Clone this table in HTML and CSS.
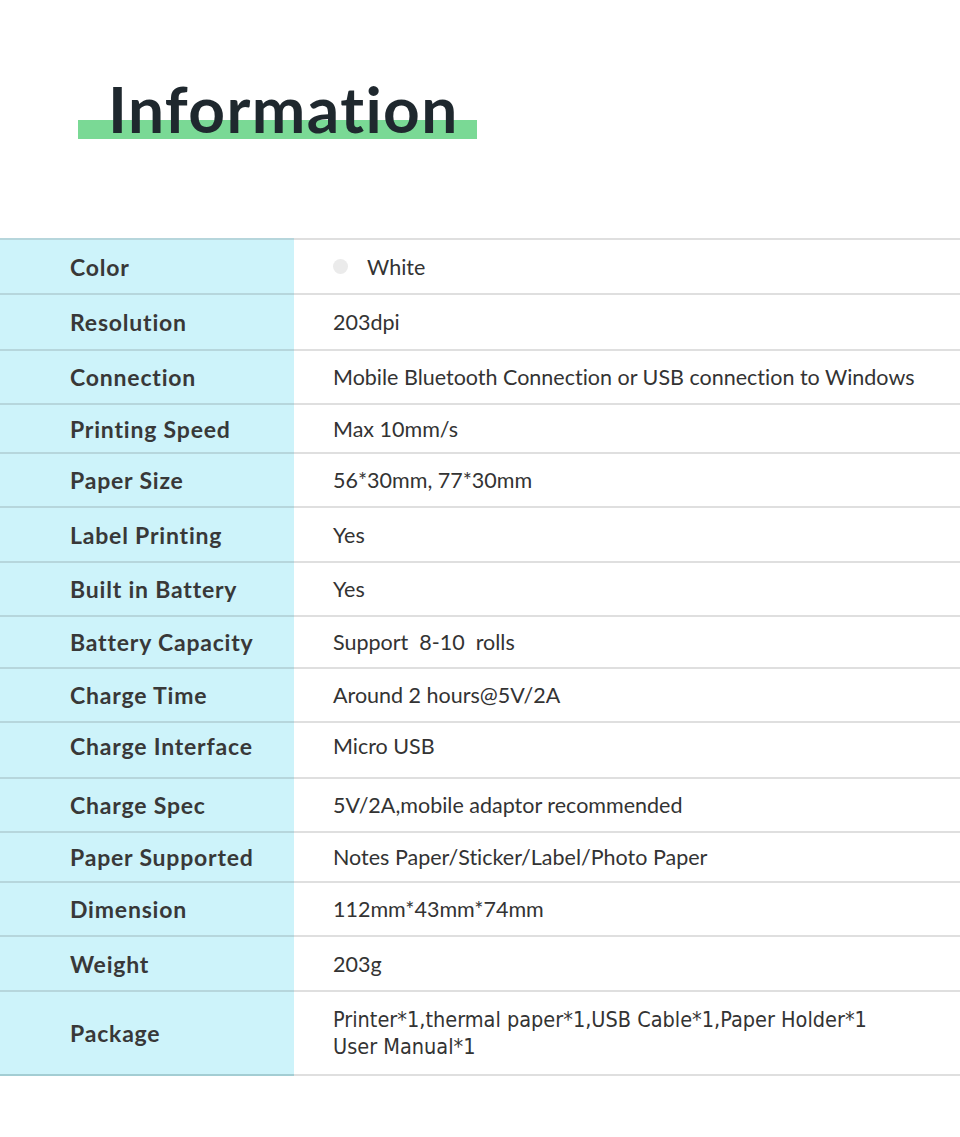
FILE: index.html
```html
<!DOCTYPE html>
<html lang="en">
<head>
<meta charset="utf-8">
<title>Information</title>
<link rel="stylesheet" href="styles.css">
</head>
<body>
<header class="hero">
  <h1 class="title"><span class="title-mark">Information</span></h1>
</header>
<section class="specs">
  <div class="label">Color</div>
  <div class="value"><span class="swatch"></span>White</div>
  <div class="label">Resolution</div>
  <div class="value">203dpi</div>
  <div class="label">Connection</div>
  <div class="value">Mobile Bluetooth Connection or USB connection to Windows</div>
  <div class="label">Printing Speed</div>
  <div class="value">Max 10mm/s</div>
  <div class="label">Paper Size</div>
  <div class="value">56*30mm, 77*30mm</div>
  <div class="label">Label Printing</div>
  <div class="value">Yes</div>
  <div class="label">Built in Battery</div>
  <div class="value">Yes</div>
  <div class="label">Battery Capacity</div>
  <div class="value">Support&nbsp; 8-10&nbsp; rolls</div>
  <div class="label">Charge Time</div>
  <div class="value">Around 2 hours@5V/2A</div>
  <div class="label raised">Charge Interface</div>
  <div class="value raised">Micro USB</div>
  <div class="label">Charge Spec</div>
  <div class="value">5V/2A,mobile adaptor recommended</div>
  <div class="label">Paper Supported</div>
  <div class="value">Notes Paper/Sticker/Label/Photo Paper</div>
  <div class="label">Dimension</div>
  <div class="value">112mm*43mm*74mm</div>
  <div class="label">Weight</div>
  <div class="value">203g</div>
  <div class="label last">Package</div>
  <div class="value last condensed">Printer*1,thermal paper*1,USB Cable*1,Paper Holder*1<br>User Manual*1</div>
</section>
</body>
</html>
```
FILE: styles.css
```css
* { box-sizing: border-box; }
html, body {
  margin: 0;
  padding: 0;
  background: #ffffff;
}
body {
  width: 960px;
  height: 1137px;
  font-family: Lato, "Open Sans", sans-serif;
  color: #333333;
  font-variant-ligatures: none;
}
.hero {
  height: 238px;
  padding-top: 69px;
  padding-left: 78px;
}
.title {
  margin: 0;
  font-size: 64px;
  line-height: 80px;
  font-weight: 700;
  letter-spacing: 1.4px;
  color: #1f282e;
}
.title-mark {
  display: inline-block;
  padding: 0 18px 0 30px;
  background: linear-gradient(to bottom,
    transparent 0, transparent 51px,
    #7ad995 51px, #7ad995 70px,
    transparent 70px);
}
.specs {
  display: grid;
  grid-template-columns: 294px 1fr;
  grid-template-rows: 55px 56px 54px 49px 54px 55px 54px 52px 54px 56px 54px 50px 54px 55px 86px;
}
.label, .value {
  display: flex;
  align-items: center;
}
.label {
  background: #cdf3fa;
  border-top: 2px solid #b6d6dc;
  padding-left: 70px;
  font-size: 23px;
  font-weight: 700;
  letter-spacing: 0.8px;
  color: #383838;
}
.value {
  border-top: 2px solid #dfdfdf;
  padding-left: 39px;
  font-size: 21.5px;
  font-weight: 400;
  color: #333333;
}
.raised { padding-bottom: 8px; }
.label.last { border-bottom: 2px solid #a3cdd3; }
.value.last { border-bottom: 2px solid #dfdfdf; }
.swatch {
  display: inline-block;
  width: 15px;
  height: 15px;
  border-radius: 50%;
  background: #ebebeb;
  margin-right: 19px;
}
.condensed {
  font-family: "DejaVu Sans Condensed", "DejaVu Sans", sans-serif;
  font-stretch: condensed;
  font-size: 21.5px;
  line-height: 27px;
}
```
